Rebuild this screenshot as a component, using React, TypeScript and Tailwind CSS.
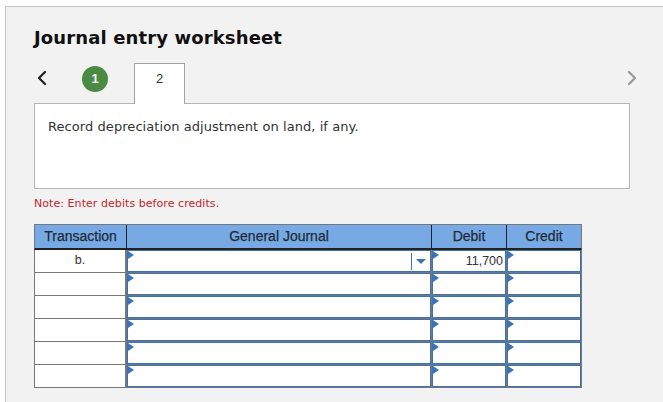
import React from 'react';
import { ChevronLeft, ChevronRight } from 'lucide-react';

const Flag = () => (
  <span className="absolute left-0 top-0 w-0 h-0 border-y-[4px] border-y-transparent border-l-[6px] border-l-[#3b73b9]"></span>
);

const EntryCell = ({ width, value, select }: { width: string; value?: string; select?: boolean }) => (
  <div className={`${width} border-r border-[#777]`}>
    <div className={`relative h-full flex items-center justify-end bg-white border border-[#3b73b9] text-[12.5px] text-[#333] ${select ? 'pr-0' : 'pr-[2px]'}`}>
      <Flag />
      {select && (
        <div className="flex items-center justify-center w-[19px] h-[17px] border-l border-[#3b73b9]">
          <span className="w-0 h-0 border-x-[5px] border-x-transparent border-t-[5px] border-t-[#3b73b9]"></span>
        </div>
      )}
      {value}
    </div>
  </div>
);

const App: React.FC = () => {
  const rows = [
    { tx: 'b.', debit: '11,700', select: true },
    { tx: '' },
    { tx: '' },
    { tx: '' },
    { tx: '' },
    { tx: '' },
  ];

  return (
    <div className="w-[663px] h-[402px] overflow-hidden bg-white pl-[5px] pt-[6px]">
      <div className="h-[396px] bg-[#f2f2f2] border-l border-t border-[#c6c6c6] pl-[28px] font-['DejaVu_Sans',sans-serif]">
        <h1 className="pt-[18px] h-[56px] text-[18px] leading-[26px] tracking-[0.13px] font-bold text-[#111]">Journal entry worksheet</h1>

        <div className="relative flex items-start h-[40px] w-[596px]">
          <ChevronLeft className="w-[24px] h-[24px] mt-[3px] ml-[-4px] text-[#222]" strokeWidth={2.25} />
          <div className="ml-[28px] mt-[3px] w-[26px] h-[26px] rounded-full bg-[#4a8a43] flex items-center justify-center text-white text-[13px] font-bold font-['Liberation_Sans',sans-serif]">1</div>
          <div className="ml-[26px] relative z-10 w-[51px] h-[41px] bg-white border border-b-0 border-[#a3a3a3] flex justify-center pt-[7px] text-[13px] leading-[16px] text-[#333] font-['Liberation_Sans',sans-serif]">2</div>
          <ChevronRight className="absolute right-[-14px] top-[3px] w-[24px] h-[24px] text-[#999]" strokeWidth={2.25} />
        </div>

        <div className="w-[596px] h-[86px] bg-white border border-[#b5b5b5] pl-[13px] pt-[14px] text-[13px] leading-[18px] tracking-[0.065px] text-[#333]">
          Record depreciation adjustment on land, if any.
        </div>

        <p className="mt-[7px] h-[28px] text-[11px] leading-[15px] tracking-[0.06px] text-[#c3252b]">Note: Enter debits before credits.</p>

        <div className="w-[548px] font-['Liberation_Sans',sans-serif]">
          <div className="flex h-[26px] bg-[#77aae4] border-t border-l border-r border-[#777] border-b-2 border-b-[#222] text-[14px] leading-[23px] text-[#1f2a36] [-webkit-text-stroke:0.25px] text-center">
            <div className="w-[92px] border-r border-[#222]">Transaction</div>
            <div className="w-[305px] border-r border-[#222]">General Journal</div>
            <div className="w-[75px] border-r border-[#222]">Debit</div>
            <div className="flex-1">Credit</div>
          </div>
          {rows.map((row, index) => (
            <div key={index} className="flex h-[23px] border-b border-[#777]">
              <div className="w-[93px] bg-white border-l border-r-2 border-[#777] text-center text-[12.5px] leading-[21px] text-[#333]">{row.tx}</div>
              <EntryCell width="w-[305px]" select={row.select} />
              <EntryCell width="w-[75px]" value={row.debit} />
              <EntryCell width="w-[75px]" />
            </div>
          ))}
        </div>
      </div>
    </div>
  );
};

export default App;
